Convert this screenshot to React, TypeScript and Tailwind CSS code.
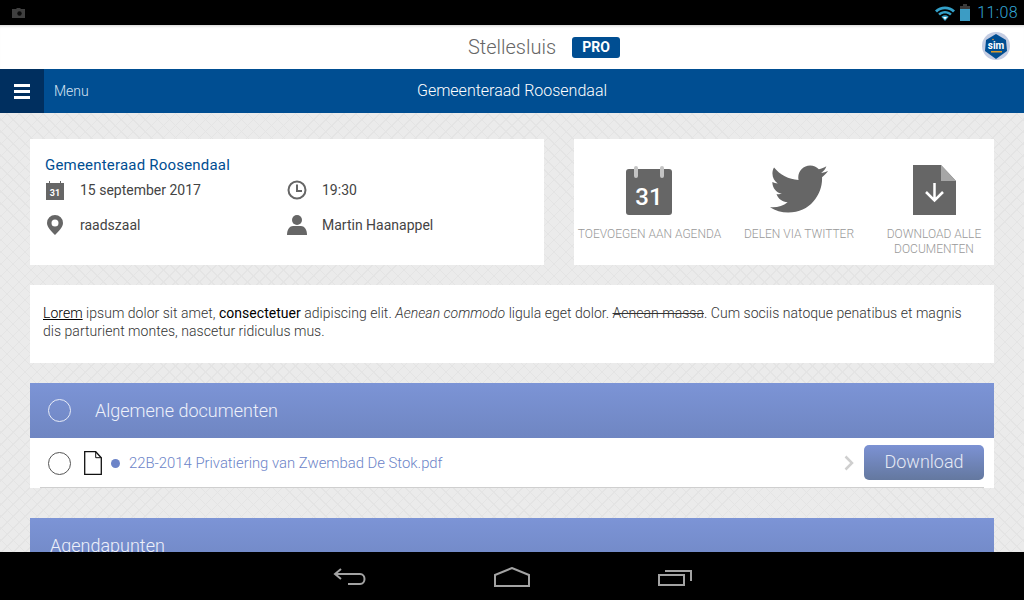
import { FaTwitter } from "react-icons/fa";

const pageBg =
  "bg-[#ebebeb] bg-[repeating-linear-gradient(45deg,#e4e4e4_0,#e4e4e4_1px,transparent_1px,transparent_8.5px),repeating-linear-gradient(-45deg,#e4e4e4_0,#e4e4e4_1px,transparent_1px,transparent_8.5px)]";

function StatusBar() {
  return (
    <div className="flex h-[25px] shrink-0 items-center justify-between bg-black pl-3 pr-[6px]">
      <svg width="13" height="10" viewBox="0 0 13 10" className="mt-[1px]">
        <path d="M0 1h4l1-1h3l1 1h4v9H0z" fill="#3f3f3f" />
        <circle cx="7.5" cy="5.5" r="2.2" fill="#0b0b0b" />
      </svg>
      <div className="flex items-center">
        <svg width="20" height="15" viewBox="0 0 20 15" className="mt-[1px]">
          <path d="M0 4.500C5.500-.8 14.500-.8 20 4.500L18 6.500C13.500 2.300 6.500 2.300 2 6.500z" fill="#33a0c8" />
          <path d="M3.200 7.700C7.200 4 12.800 4 16.800 7.700L15 9.500C12 6.900 8 6.900 5 9.500z" fill="#33a0c8" />
          <path d="M6.300 10.700C8.600 8.900 11.400 8.900 13.700 10.700L10 15z" fill="#33a0c8" />
          <path d="M8 11h4l-2 2.500z" fill="#fff" />
        </svg>
        <svg width="10" height="17" viewBox="0 0 10 17" className="ml-[5px]">
          <path d="M3 0h4v2h3v15H0V2h3z" fill="#3a3a3a" />
          <rect x="0" y="5" width="10" height="12" fill="#3c9cc4" />
        </svg>
        <span className="ml-[7px] font-['Roboto',sans-serif] text-[16px] font-light leading-none tracking-[0.4px] text-[#33a8d8]">
          11:08
        </span>
      </div>
    </div>
  );
}

function SimLogo() {
  return (
    <svg width="28" height="30" viewBox="0 0 28 30">
      <circle cx="14" cy="15" r="14" fill="#c3cce2" />
      <path d="M14 3l10 6 1 11-11 8L3 20 4 9z" fill="#004e92" />
      <text x="14" y="18" textAnchor="middle" fill="#fff" fontSize="10" fontWeight="700" fontFamily="Roboto, sans-serif">
        sim
      </text>
      <rect x="9" y="20" width="11" height="1.500" fill="#d99a2b" />
      <circle cx="11" cy="8.500" r="0.800" fill="#e8962a" />
    </svg>
  );
}

function Header() {
  return (
    <div className="relative grid h-11 shrink-0 grid-cols-[1fr_auto_1fr] items-center bg-white shadow-[inset_0_3px_3px_-2px_rgba(0,0,0,0.18)]">
      <span />
      <span className="text-[20px] font-light leading-none text-[#666]">Stellesluis</span>
      <span className="ml-[16px] flex h-[21px] w-12 items-center justify-center rounded-[3px] bg-[#004e92] text-[14px] font-bold leading-none text-white">
        PRO
      </span>
      <div className="absolute right-[14px] top-[6px]">
        <SimLogo />
      </div>
    </div>
  );
}

function MenuBar() {
  return (
    <div className="relative flex h-11 shrink-0 items-center bg-[#004e92] text-white">
      <div className="flex h-11 w-11 flex-col items-center justify-center gap-[3px] bg-[#002f5f]">
        <span className="h-[3px] w-4 bg-white" />
        <span className="h-[3px] w-4 bg-white" />
        <span className="h-[3px] w-4 bg-white" />
      </div>
      <span className="ml-[10px] text-[14px] font-light text-[#d8e4f2]">Menu</span>
      <span className="absolute inset-x-0 text-center text-[16px] font-light leading-none">
        Gemeenteraad Roosendaal
      </span>
    </div>
  );
}

function SmallCalendar() {
  return (
    <svg width="18" height="19" viewBox="0 0 18 19">
      <path d="M0 2h3V0h1v2h10V0h1v2h3v17H0z" fill="#666" />
      <text x="9" y="15" textAnchor="middle" fill="#fff" fontSize="9" fontWeight="700" fontFamily="Roboto, sans-serif">
        31
      </text>
    </svg>
  );
}

function ClockIcon() {
  return (
    <svg width="20" height="20" viewBox="0 0 20 20" fill="none" stroke="#666" strokeWidth="2">
      <circle cx="10" cy="10" r="8.500" />
      <path d="M10 4.500V11H15" />
    </svg>
  );
}

function PinIcon() {
  return (
    <svg width="16" height="20" viewBox="0 0 16 20">
      <path
        fillRule="evenodd"
        d="M8 0a8 8 0 0 1 8 8c0 4-4 8-8 12C4 16 0 12 0 8a8 8 0 0 1 8-8zm0 4.500a3.500 3.500 0 1 0 0 7 3.500 3.500 0 0 0 0-7z"
        fill="#666"
      />
    </svg>
  );
}

function PersonIcon() {
  return (
    <svg width="20" height="20" viewBox="0 0 20 20" fill="#666">
      <circle cx="10" cy="5" r="5" />
      <path d="M0 20c0-6 3-9 6-9h8c3 0 6 3 6 9z" />
    </svg>
  );
}

function InfoCard() {
  return (
    <div className="h-[126px] w-[514px] bg-white pl-[15px] pt-[17px]">
      <p className="text-[15px] leading-[18px] tracking-[0.2px] text-[#004e92]">Gemeenteraad Roosendaal</p>
      <div className="mt-[6px] grid grid-cols-[242px_1fr] gap-y-[15px] text-[14px] font-normal text-[#444]">
        <InfoItem icon={<SmallCalendar />} label="15 september 2017" />
        <InfoItem icon={<ClockIcon />} label="19:30" />
        <InfoItem icon={<PinIcon />} label="raadszaal" />
        <InfoItem icon={<PersonIcon />} label="Martin Haanappel" />
      </div>
    </div>
  );
}

function InfoItem({ icon, label }: { icon: React.ReactNode; label: string }) {
  return (
    <div className="flex h-5 items-center">
      <div className="flex w-[20px] justify-center">{icon}</div>
      <span className="ml-[15px] leading-none">{label}</span>
    </div>
  );
}

function BigCalendar() {
  return (
    <svg width="46" height="49" viewBox="0 0 46 49">
      <rect x="0" y="3" width="46" height="46" rx="3" fill="#666" />
      <rect x="8" y="0" width="4" height="12" rx="2" fill="#c4c4c4" />
      <rect x="34" y="0" width="4" height="12" rx="2" fill="#c4c4c4" />
      <text x="23" y="39" textAnchor="middle" fill="#fff" fontSize="24" fontWeight="500" fontFamily="Roboto, sans-serif">
        31
      </text>
    </svg>
  );
}

function DownloadFile() {
  return (
    <svg width="43" height="50" viewBox="0 0 43 50">
      <path d="M0 0h28l15 16v34H0z" fill="#666" />
      <path d="M28 0l15 16H28z" fill="#a6a6a6" />
      <path d="M21.500 18v17M13 27l8.500 8.500L30 27" fill="none" stroke="#fff" strokeWidth="2.500" />
    </svg>
  );
}

function ActionsCard() {
  const label = "text-center text-[12px] font-light leading-[15px] text-[#999]";
  return (
    <div className="grid h-[126px] w-[420px] grid-cols-[151px_148px_1fr] bg-white pt-[25px]">
      <div className="flex flex-col items-center">
        <div className="mr-[2px] flex h-[51px] items-end">
          <BigCalendar />
        </div>
        <p className={`mt-[12px] ${label}`}>TOEVOEGEN AAN AGENDA</p>
      </div>
      <div className="flex flex-col items-center">
        <div className="flex h-[51px] items-center">
          <FaTwitter className="mb-[2px] h-[58px] w-[58px] text-[#666]" />
        </div>
        <p className={`mt-[12px] ${label}`}>DELEN VIA TWITTER</p>
      </div>
      <div className="flex flex-col items-center pl-[1px]">
        <div className="flex h-[51px] items-end">
          <DownloadFile />
        </div>
        <p className={`mt-[12px] ${label}`}>
          DOWNLOAD ALLE
          <br />
          DOCUMENTEN
        </p>
      </div>
    </div>
  );
}

function Intro() {
  return (
    <div className="mt-5 h-[78px] bg-white px-[13px] pt-[19px] text-[14px] font-light leading-[18px] tracking-[0.03px] text-[#333]">
      <u className="text-black">Lorem</u> ipsum dolor sit amet,{" "}
      <span className="font-normal text-black">consectetuer</span> adipiscing elit.{" "}
      <em>Aenean commodo</em> ligula eget dolor. <s>Aenean massa</s>. Cum sociis natoque penatibus et magnis
      <br />
      dis parturient montes, nascetur ridiculus mus.
    </div>
  );
}

function Circle({ color }: { color: string }) {
  return <span className={`h-[23px] w-[23px] shrink-0 rounded-full border ${color}`} />;
}

function DocIcon() {
  return (
    <svg width="18" height="24" viewBox="0 0 18 24" className="shrink-0">
      <path d="M.7.700h11l5.600 6v16.600H.7z" fill="#fff" stroke="#111" strokeWidth="1.300" />
      <path d="M11.700.700v6h5.600" fill="none" stroke="#111" strokeWidth="1" />
    </svg>
  );
}

function Documents() {
  return (
    <div className="mt-5">
      <div className="flex h-[55px] items-center bg-gradient-to-b from-[#7c94d6] to-[#6f86c2] pl-[18px] text-white">
        <Circle color="border-[#e8ecf8]" />
        <span className="ml-[24px] text-[18px] font-light leading-none text-[#eef1fa]">Algemene documenten</span>
      </div>
      <div className="relative flex h-[50px] items-center bg-white pl-[18px] pr-[10px]">
        <Circle color="border-[#555]" />
        <span className="ml-[13px] flex">
          <DocIcon />
        </span>
        <span className="ml-[9px] h-[9px] w-[9px] shrink-0 rounded-full bg-[#6c84c8]" />
        <span className="ml-[9px] text-[14.85px] font-light leading-none text-[#6c84c8]">
          22B-2014 Privatiering van Zwembad De Stok.pdf
        </span>
        <svg width="10" height="16" viewBox="0 0 10 16" className="ml-auto" fill="none" stroke="#cfcfcf" strokeWidth="2.500">
          <path d="M1.500 1.500L8 8l-6.500 6.500" />
        </svg>
        <button className="mb-[2px] ml-[10px] h-[35px] w-[120px] rounded-[5px] bg-gradient-to-b from-[#7c92d4] to-[#64789f] text-[18px] font-light leading-none text-[#e6eaf5]">
          Download
        </button>
        <div className="absolute bottom-0 left-[10px] right-[10px] h-[1px] bg-[#cfcfcf]" />
      </div>
      <div className="mt-[30px] flex h-[55px] items-start bg-gradient-to-b from-[#7c94d6] to-[#6f86c2] pl-[20px] pt-[19px]">
        <span className="text-[18px] font-light leading-none text-[#eef1fa]">Agendapunten</span>
      </div>
    </div>
  );
}

function NavBar() {
  return (
    <div className="flex h-12 shrink-0 items-center justify-center bg-black">
      <svg width="34" height="18" viewBox="0 0 34 18" fill="none" stroke="#a3a3a3" strokeWidth="2" className="mr-[127px] mt-[2px]">
        <path d="M8 1L2 6l6 5M2 6h25c6 0 6 10 0 10H15" />
      </svg>
      <svg width="36" height="20" viewBox="0 0 36 20" fill="none" stroke="#a3a3a3" strokeWidth="2" className="mr-[128px] mt-[1px]">
        <path d="M1 19V8L18 1l17 7v11z" />
      </svg>
      <svg width="34" height="18" viewBox="0 0 34 18" fill="none" stroke="#a3a3a3" strokeWidth="2" className="mt-[2px]">
        <path d="M1 7h25v10H1zM7 3h26v10" />
      </svg>
    </div>
  );
}

export default function App() {
  return (
    <div className="flex h-[600px] w-[1024px] flex-col overflow-hidden font-['Roboto',sans-serif]">
      <StatusBar />
      <Header />
      <MenuBar />
      <main className={`min-h-0 flex-1 overflow-hidden px-[30px] pt-[26px] ${pageBg}`}>
        <div className="flex justify-between">
          <InfoCard />
          <ActionsCard />
        </div>
        <Intro />
        <Documents />
      </main>
      <NavBar />
    </div>
  );
}
